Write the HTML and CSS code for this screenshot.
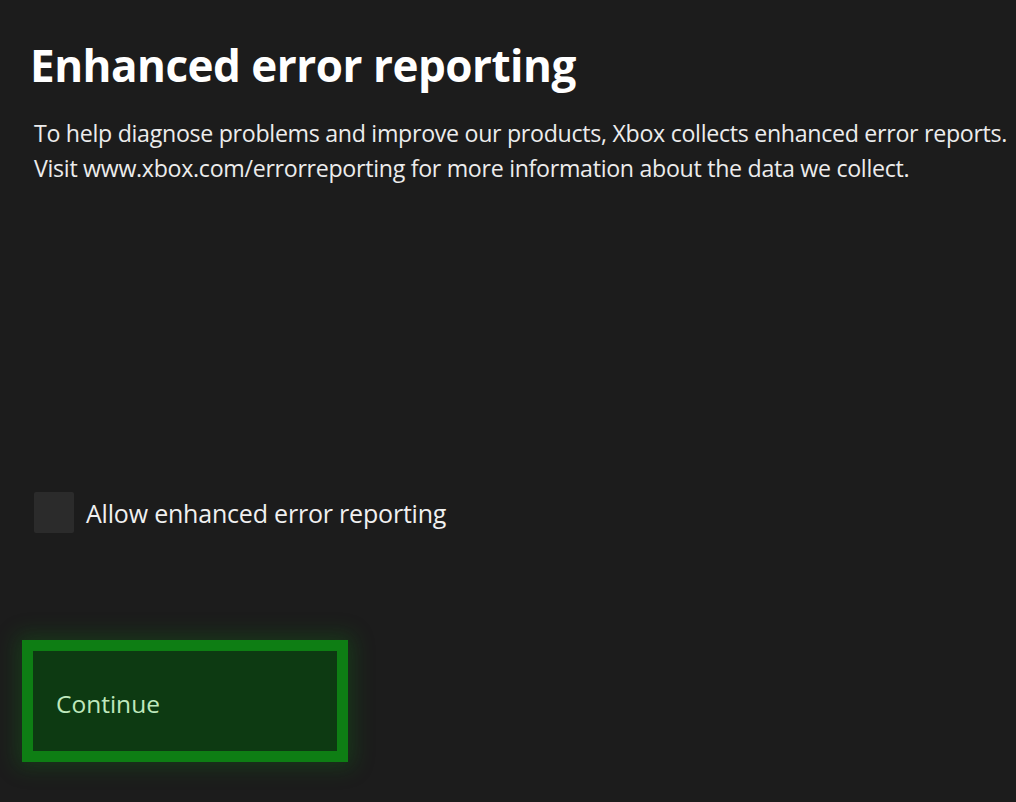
FILE: index.html
```html
<!DOCTYPE html>
<html lang="en">
<head>
    <meta charset="UTF-8">
    <meta name="viewport" content="width=device-width, initial-scale=1.0">
    <title>Enhanced error reporting</title>
    <link rel="stylesheet" href="styles.css">
</head>
<body>

<div class="page">
    <h1 class="title">Enhanced error reporting</h1>
    <p class="intro">
        To help diagnose problems and improve our products, Xbox collects enhanced error reports.<br>
        Visit www.xbox.com/errorreporting for more information about the data we collect.
    </p>

    <label class="option">
        <span class="check-box"></span>
        <span class="option-text">Allow enhanced error reporting</span>
    </label>

    <button class="btn-continue">Continue</button>
</div>

</body>
</html>
```

FILE: styles.css
```css
body {
    margin: 0;
    padding: 0;
    background-color: #1c1c1c;
    font-family: "Open Sans", "Noto Sans", sans-serif;
    color: #f2f2f2;
}
.page {
    width: 1016px;
    height: 802px;
    box-sizing: border-box;
    padding: 30px 0 0 30px;
    display: flex;
    flex-direction: column;
    align-items: flex-start;
}
.title {
    margin: 0;
    font-size: 44px;
    font-weight: 700;
    line-height: 70px;
    color: #ffffff;
    letter-spacing: -0.5px;
}
.intro {
    margin: 16px 0 0 4px;
    font-size: 23.2px;
    line-height: 35px;
    color: #ececec;
    letter-spacing: -0.3px;
    white-space: nowrap;
}
.option {
    display: flex;
    align-items: center;
    gap: 12px;
    margin: 306px 0 0 4px;
}
.check-box {
    width: 40px;
    height: 41px;
    background-color: #2b2b2b;
    border-radius: 2px;
}
.option-text {
    font-size: 25px;
    color: #f0f0f0;
    letter-spacing: -0.2px;
}
/* botão com borda verde e brilho */
.btn-continue {
    margin: 107px 0 0 -8px;
    width: 326px;
    height: 122px;
    box-sizing: border-box;
    border: 11px solid #0e7e14;
    background-color: #0d3a12;
    box-shadow: 0 0 20px 5px rgba(16, 130, 20, 0.28);
    color: #bfe8bd;
    font-family: "Open Sans", "Noto Sans", sans-serif;
    font-size: 24.5px;
    text-align: left;
    padding: 4px 0 0 23px;
    cursor: pointer;
}
```
